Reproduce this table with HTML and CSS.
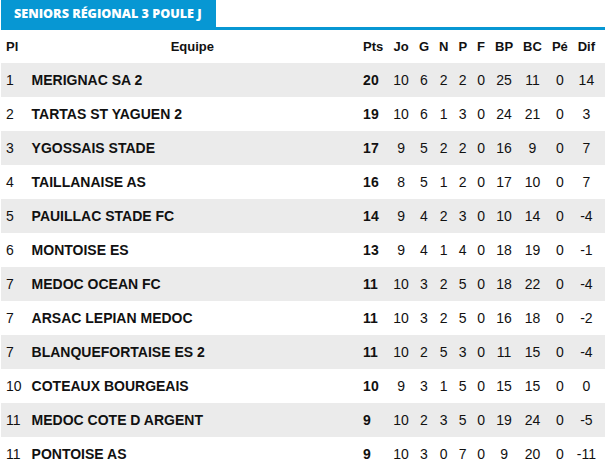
FILE: index.html
```html
<!DOCTYPE html>
<html lang="fr">
<head>
<meta charset="utf-8">
<title>Classement</title>
<link rel="stylesheet" href="styles.css">
</head>
<body>
<div class="wrap">
  <div class="tabbar">
    <div class="tab">SENIORS RÉGIONAL 3 POULE J</div>
  </div>
  <table class="standings">
    <thead>
      <tr>
        <th class="pl">Pl</th>
        <th class="team-h">Equipe</th>
        <th class="pts">Pts</th>
        <th class="c">Jo</th>
        <th class="c">G</th>
        <th class="c">N</th>
        <th class="c">P</th>
        <th class="c">F</th>
        <th class="c">BP</th>
        <th class="c">BC</th>
        <th class="c">Pé</th>
        <th class="dif">Dif</th>
      </tr>
    </thead>
    <tbody>
      <tr><td class="pl">1</td><td class="team">MERIGNAC SA 2</td><td class="pts">20</td><td class="c">10</td><td class="c">6</td><td class="c">2</td><td class="c">2</td><td class="c">0</td><td class="c">25</td><td class="c">11</td><td class="c">0</td><td class="dif">14</td></tr>
      <tr><td class="pl">2</td><td class="team">TARTAS ST YAGUEN 2</td><td class="pts">19</td><td class="c">10</td><td class="c">6</td><td class="c">1</td><td class="c">3</td><td class="c">0</td><td class="c">24</td><td class="c">21</td><td class="c">0</td><td class="dif">3</td></tr>
      <tr><td class="pl">3</td><td class="team">YGOSSAIS STADE</td><td class="pts">17</td><td class="c">9</td><td class="c">5</td><td class="c">2</td><td class="c">2</td><td class="c">0</td><td class="c">16</td><td class="c">9</td><td class="c">0</td><td class="dif">7</td></tr>
      <tr><td class="pl">4</td><td class="team">TAILLANAISE AS</td><td class="pts">16</td><td class="c">8</td><td class="c">5</td><td class="c">1</td><td class="c">2</td><td class="c">0</td><td class="c">17</td><td class="c">10</td><td class="c">0</td><td class="dif">7</td></tr>
      <tr><td class="pl">5</td><td class="team">PAUILLAC STADE FC</td><td class="pts">14</td><td class="c">9</td><td class="c">4</td><td class="c">2</td><td class="c">3</td><td class="c">0</td><td class="c">10</td><td class="c">14</td><td class="c">0</td><td class="dif">-4</td></tr>
      <tr><td class="pl">6</td><td class="team">MONTOISE ES</td><td class="pts">13</td><td class="c">9</td><td class="c">4</td><td class="c">1</td><td class="c">4</td><td class="c">0</td><td class="c">18</td><td class="c">19</td><td class="c">0</td><td class="dif">-1</td></tr>
      <tr><td class="pl">7</td><td class="team">MEDOC OCEAN FC</td><td class="pts">11</td><td class="c">10</td><td class="c">3</td><td class="c">2</td><td class="c">5</td><td class="c">0</td><td class="c">18</td><td class="c">22</td><td class="c">0</td><td class="dif">-4</td></tr>
      <tr><td class="pl">7</td><td class="team">ARSAC LEPIAN MEDOC</td><td class="pts">11</td><td class="c">10</td><td class="c">3</td><td class="c">2</td><td class="c">5</td><td class="c">0</td><td class="c">16</td><td class="c">18</td><td class="c">0</td><td class="dif">-2</td></tr>
      <tr><td class="pl">7</td><td class="team">BLANQUEFORTAISE ES 2</td><td class="pts">11</td><td class="c">10</td><td class="c">2</td><td class="c">5</td><td class="c">3</td><td class="c">0</td><td class="c">11</td><td class="c">15</td><td class="c">0</td><td class="dif">-4</td></tr>
      <tr><td class="pl">10</td><td class="team">COTEAUX BOURGEAIS</td><td class="pts">10</td><td class="c">9</td><td class="c">3</td><td class="c">1</td><td class="c">5</td><td class="c">0</td><td class="c">15</td><td class="c">15</td><td class="c">0</td><td class="dif">0</td></tr>
      <tr><td class="pl">11</td><td class="team">MEDOC COTE D ARGENT</td><td class="pts">9</td><td class="c">10</td><td class="c">2</td><td class="c">3</td><td class="c">5</td><td class="c">0</td><td class="c">19</td><td class="c">24</td><td class="c">0</td><td class="dif">-5</td></tr>
      <tr><td class="pl">11</td><td class="team">PONTOISE AS</td><td class="pts">9</td><td class="c">10</td><td class="c">3</td><td class="c">0</td><td class="c">7</td><td class="c">0</td><td class="c">9</td><td class="c">20</td><td class="c">0</td><td class="dif">-11</td></tr>
    </tbody>
  </table>
</div>
</body>
</html>
```
FILE: styles.css
```css
html, body {
  margin: 0;
  padding: 0;
  background: #ffffff;
}

body {
  font-family: "Liberation Sans", Arial, Helvetica, sans-serif;
  color: #111111;
}

.wrap {
  padding-left: 1px;
}

.tabbar {
  display: flex;
  border-bottom: 3px solid #0797d3;
}

.tab {
  box-sizing: border-box;
  width: 215px;
  height: 27px;
  padding-left: 13px;
  display: flex;
  align-items: center;
  background: #0797d3;
  color: #ffffff;
  font-family: "Open Sans", "Liberation Sans", sans-serif;
  font-weight: 800;
  font-size: 12.6px;
  text-transform: uppercase;
  white-space: nowrap;
}

.standings {
  width: 604px;
  border-collapse: collapse;
  border-spacing: 0;
}

.standings th,
.standings td {
  padding: 0 5px;
  white-space: nowrap;
  width: 1px;
}

.standings th {
  height: 33px;
  font-size: 13px;
  font-weight: 700;
}

.standings td {
  height: 34px;
  font-size: 14px;
  font-weight: 400;
}

.standings tbody tr:nth-child(odd) {
  background: #ebebeb;
}

.standings .pl {
  text-align: left;
}

.standings .team-h {
  width: auto;
  text-align: center;
}

.standings .team {
  width: auto;
  text-align: left;
  font-weight: 700;
}

.standings .pts {
  text-align: left;
}

.standings td.pts {
  font-weight: 700;
}

.standings .c {
  text-align: center;
}

.standings .dif {
  text-align: center;
  padding: 0 9px 0 4px;
}
```
